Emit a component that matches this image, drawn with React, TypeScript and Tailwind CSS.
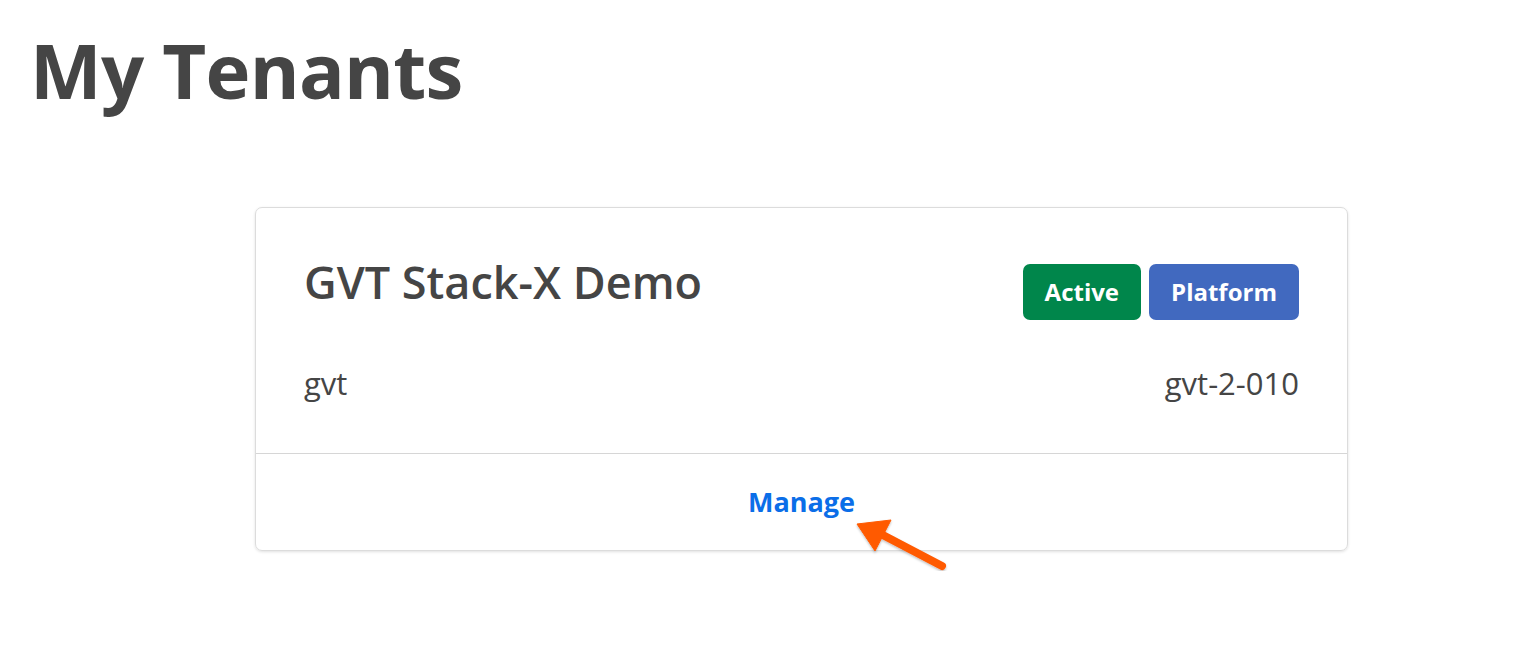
import React from 'react';

const Badge: React.FC<{ label: string; color: string }> = ({ label, color }) => (
  <span
    className={`inline-flex h-[56px] items-center rounded-[7px] px-[22px] text-[24px] font-bold text-white ${color}`}
  >
    {label}
  </span>
);

export default function App() {
  return (
    <div className="min-h-screen bg-white font-['Open_Sans',sans-serif] text-[#454545]">
      <div className="px-[30px] pt-[14px]">
        <h1 className="text-[76px] font-bold leading-[112px] tracking-[-0.01em]">My Tenants</h1>
      </div>

      <div className="relative ml-[255px] mt-[81px] w-[1093px] rounded-[7px] border border-[#dcdcdc] shadow-[0_1px_3px_rgba(0,0,0,0.12)]">
        <div className="border-b border-[#d6d6d6] px-[48px] pb-[50px] pt-[46px]">
          <div className="flex items-start justify-between">
            <h2 className="text-[45px] font-semibold leading-[56px]">GVT Stack-X Demo</h2>
            <div className="mt-[10px] flex gap-[8px]">
              <Badge label="Active" color="bg-[#00864b]" />
              <Badge label="Platform" color="bg-[#4169bf]" />
            </div>
          </div>
          <div className="mt-[43px] flex justify-between text-[31px] leading-[40px]">
            <span>gvt</span>
            <span>gvt-2-010</span>
          </div>
        </div>
        <div className="flex h-[96px] items-center justify-center">
          <a href="#" className="text-[27px] font-bold text-[#0b6ee8]">
            Manage
          </a>
        </div>

        <svg
          className="pointer-events-none absolute left-[595px] top-[303px]"
          width="100"
          height="60"
          viewBox="0 0 100 60"
        >
          <defs>
            <filter id="sh" x="-20%" y="-20%" width="140%" height="140%">
              <feDropShadow dx="0" dy="1.5" stdDeviation="1" floodColor="#000" floodOpacity="0.25" />
            </filter>
          </defs>
          <g filter="url(#sh)" fill="#ff5a00" stroke="#ff5a00">
            <line x1="28" y1="22" x2="91" y2="55" strokeWidth="8" strokeLinecap="round" />
            <polygon points="6,13 40,9 24,40" strokeWidth="1" strokeLinejoin="round" />
          </g>
        </svg>
      </div>
    </div>
  );
}
